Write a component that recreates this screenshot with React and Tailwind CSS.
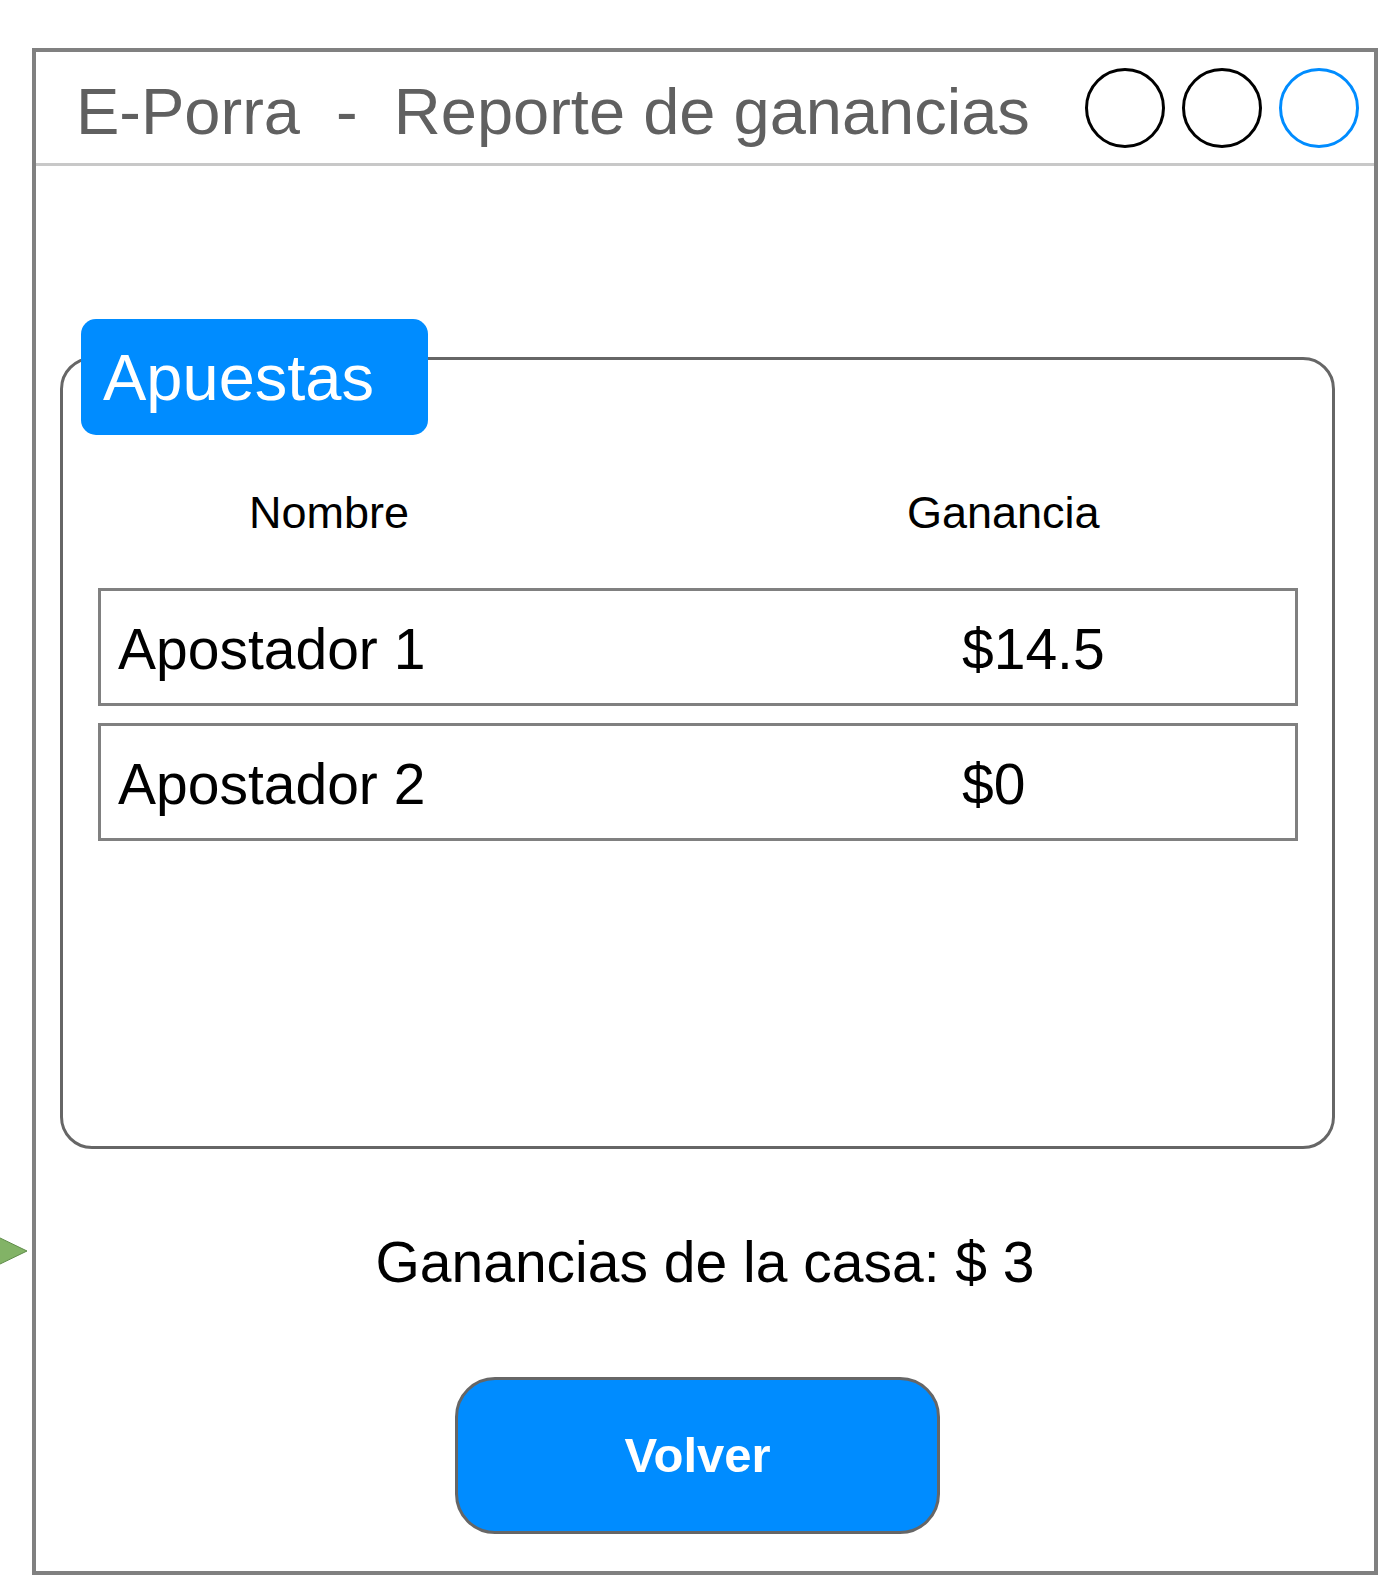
const rows = [
  { name: "Apostador 1", value: "$14.5" },
  { name: "Apostador 2", value: "$0" },
];

const Circle = ({ color }) => (
  <div className={`w-[80px] h-[80px] rounded-full border-[3px] ${color}`} />
);

export default function App() {
  return (
    <div
      className="relative w-[1392px] h-[1594px] bg-white pl-[32px] pt-[48px]"
      style={{ fontFamily: '"Liberation Sans", Arial, sans-serif' }}
    >
      {/* arrow tip poking in from the left */}
      <svg className="absolute left-0 top-[1236px]" width="30" height="32" viewBox="0 0 30 32">
        <polygon points="-2,1 27,15 -2,29" fill="#82b366" stroke="#5f8c4a" strokeWidth="1" />
      </svg>

      <div className="w-[1346px] h-[1527px] border-4 border-[#808080] flex flex-col">
        {/* window header */}
        <div className="h-[111px] flex items-center justify-between pl-[40px] pr-[15px]">
          <div className="text-[65px] leading-none text-[#606060] mt-[7px] whitespace-pre">
            E-Porra  -  Reporte de ganancias
          </div>
          <div className="flex gap-[17px]">
            <Circle color="border-black" />
            <Circle color="border-black" />
            <Circle color="border-[#008cff]" />
          </div>
        </div>
        <div className="h-[3px] bg-[#c8c8c8]" />

        {/* Apuestas panel */}
        <div className="relative ml-[24px] mr-[39px] mt-[191px] h-[792px] border-[3px] border-[#666666] rounded-[32px]">
          <div className="absolute left-[18px] -top-[41px] w-[347px] h-[116px] rounded-[15px] bg-[#008cff] flex items-center pl-[22px]">
            <span className="text-[65px] leading-none text-white">Apuestas</span>
          </div>

          <div className="flex pt-[130px] pl-[186px] text-[45px] leading-none text-black">
            <span className="w-[658px]">Nombre</span>
            <span>Ganancia</span>
          </div>

          <div className="mt-[53px] ml-[35px] mr-[34px] flex flex-col gap-[17px]">
            {rows.map((r) => (
              <div
                key={r.name}
                className="h-[118px] border-[3px] border-[#808080] flex items-center pl-[17px] text-[57px] leading-none text-black"
              >
                <span className="w-[844px] mt-[5px]">{r.name}</span>
                <span className="mt-[5px]">{r.value}</span>
              </div>
            ))}
          </div>
        </div>

        <div className="mt-[85px] text-center text-[57px] leading-none text-black">
          Ganancias de la casa: $ 3
        </div>

        <button className="mt-[86px] ml-[419px] w-[485px] h-[157px] rounded-[40px] border-[3px] border-[#666666] bg-[#008cff] text-white text-[49px] font-bold">
          Volver
        </button>
      </div>
    </div>
  );
}
